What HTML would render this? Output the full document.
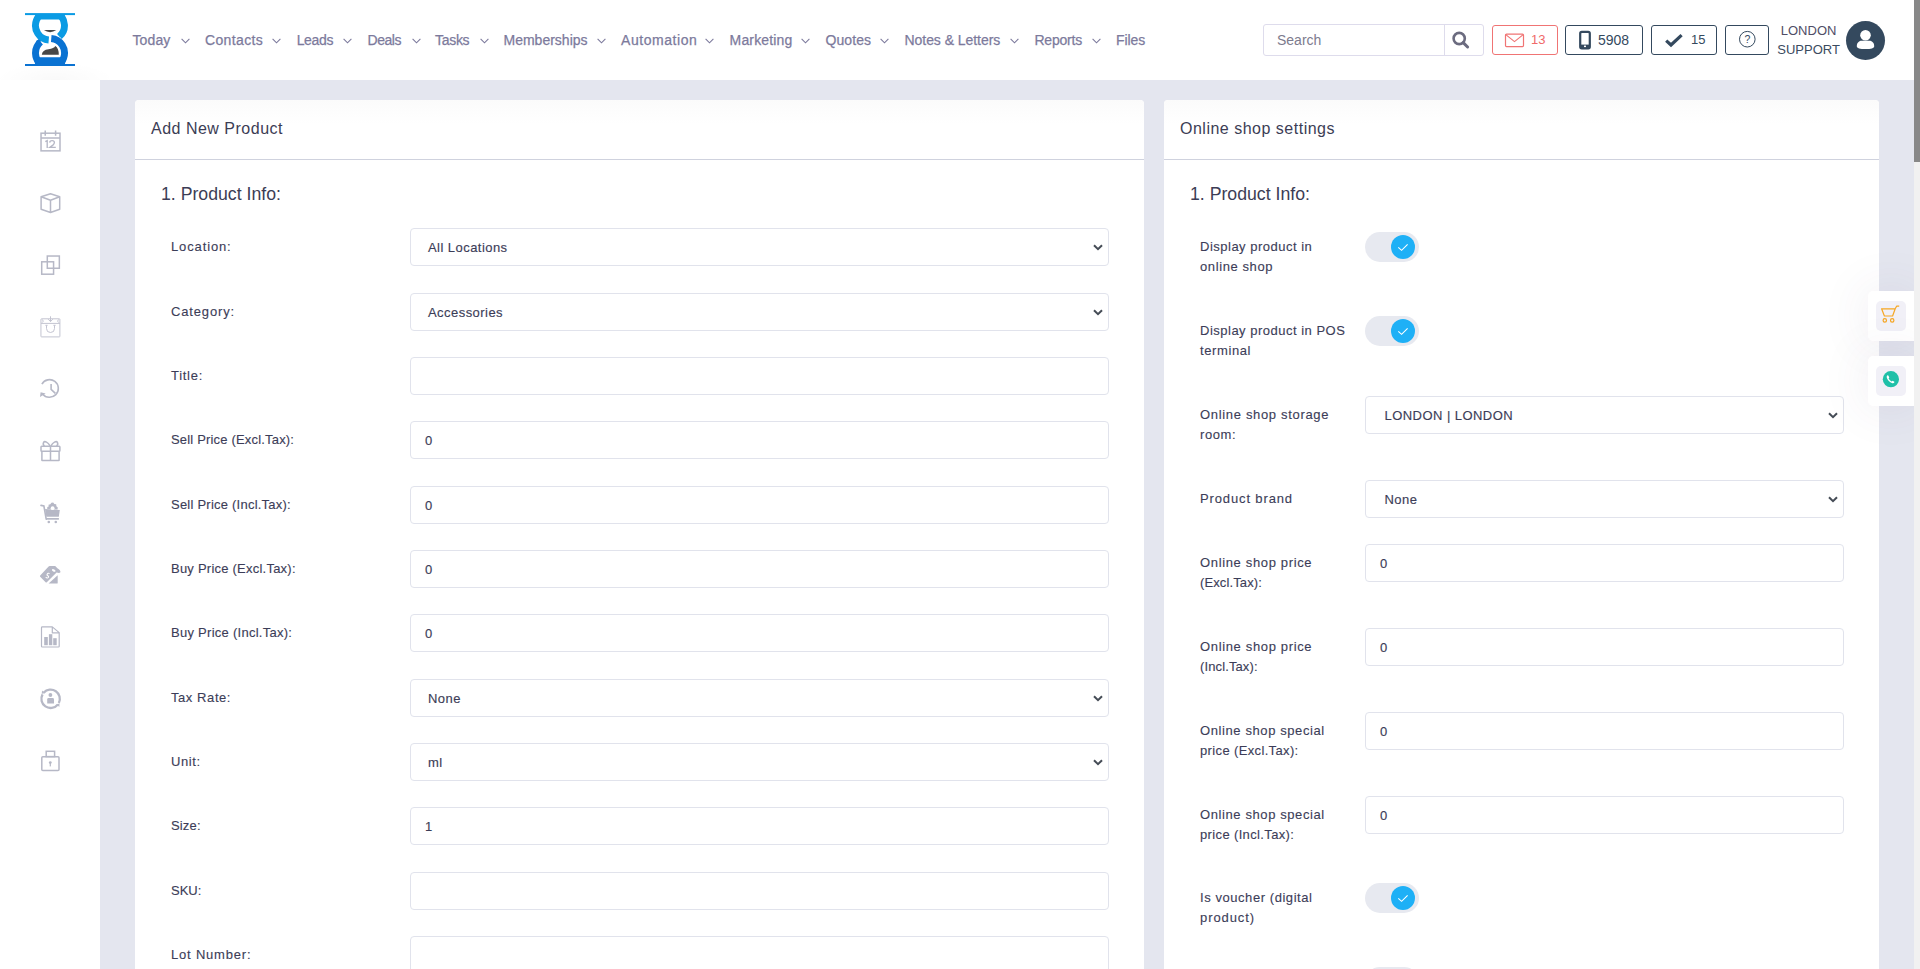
<!DOCTYPE html>
<html><head><meta charset="utf-8">
<style>
*{box-sizing:border-box;margin:0;padding:0}
html,body{width:1920px;height:969px;overflow:hidden;background:#fff;font-family:"Liberation Sans",sans-serif;}
#hdr{position:absolute;left:0;top:0;width:1914px;height:80px;background:#fff;z-index:2}
#side{position:absolute;left:0;top:80px;width:100px;height:889px;background:#fff}
#main{position:absolute;left:100px;top:80px;width:1814px;height:889px;background:#e4e6ef}
#sb{position:absolute;left:1914px;top:0;width:6px;height:969px;background:#f1f1f1;z-index:5}
#sbt{position:absolute;left:1914px;top:0;width:6px;height:162px;background:#888;z-index:6}
.nav{position:absolute;top:31px;font-size:14px;line-height:18px;color:#7c7a9c;white-space:nowrap;-webkit-text-stroke:0.25px #7c7a9c}
.chev{position:absolute;top:38px;width:9px;height:6px}
.card{position:absolute;top:100px;height:900px;background:#fff;border-radius:4px}
.chead{position:absolute;left:0;top:0;right:0;height:24px;border-radius:4px 4px 0 0;background:linear-gradient(#fbfbfb,#fff)}
.ctitle{position:absolute;font-size:16px;letter-spacing:0.5px;color:#3c3d55;white-space:nowrap;line-height:20px}
.sep{position:absolute;left:0;right:0;top:59px;height:1px;background:#cfd2de}
.sect{position:absolute;font-size:17.7px;color:#3c3d55;white-space:nowrap;line-height:22px}
.lbl{position:absolute;font-size:13px;letter-spacing:0.45px;line-height:20px;-webkit-text-stroke:0.12px #3c3d58;color:#3c3d58;white-space:nowrap}
.inp{position:absolute;height:38px;border:1px solid #e1e3ec;border-radius:4px;background:#fff}
.inp span{position:absolute;top:1px;-webkit-text-stroke:0.15px #3c3d58;font-size:13px;letter-spacing:0.45px;line-height:36px;color:#3c3d58;white-space:nowrap}
.schev{position:absolute;right:5px;top:15px;width:10px;height:7px}
.tog{position:absolute;width:54px;height:30px;border-radius:15px;background:#e7e9f0}
.knob{position:absolute;left:26px;top:3px;width:24px;height:24px;border-radius:12px;background:#1eb0f6}
.knob svg{display:block}
.hbtn{position:absolute;top:25px;height:30px;border:1px solid #2f4256;border-radius:2px;background:#fff}
.sico{position:absolute;left:40px;width:21px;height:21px}

</style></head><body>
<div id="hdr">
<svg style="position:absolute;left:25px;top:13px" width="50" height="53" viewBox="0 0 50 53">
<defs><clipPath id="lc"><rect x="0" y="2" width="50" height="49"/></clipPath></defs>
<rect x="0" y="0.1" width="50" height="2" fill="#0a9be4"/>
<rect x="0" y="51" width="50" height="2" fill="#0a72d2"/>
<g clip-path="url(#lc)" fill="none" stroke-width="6.9">
<path d="M15.7 28.9 A14.5 14.5 0 0 1 13.9 26.4" stroke="#0a72d2"/>
<path d="M23.7 26.9 A14.5 14.5 0 0 1 17.8 25.0" stroke="#fff" stroke-width="9.5"/>
<path d="M23.74 26.94 A14.5 14.5 0 1 1 34.3 23.6" stroke="#0a9be4"/>
<path d="M26.3 25.56 A14.5 14.5 0 0 1 33.5 28.8" stroke="#fff" stroke-width="9.5"/>
<path d="M26.26 25.56 A14.5 14.5 0 1 1 15.68 28.9" stroke="#0a72d2"/>
</g>
<path d="M10.6 2 H39.4 L41 6.6 H9 Z" fill="#0a9be4"/>
<path d="M9.5 44.3 H40.5 L40 51 H10 Z" fill="#0a72d2"/>
<path d="M18.9 17 Q25 21.3 31.3 17 Z" fill="#474747"/>
<path d="M16.8 41.8 Q17.4 36.8 23.5 36.2 Q29 35.6 30.3 33 Q33.8 35.2 33.8 41.8 Z" fill="#474747"/>
</svg>

<div class="nav" style="left:132.5px;letter-spacing:0.12px">Today</div>
<svg class="chev" style="left:181px" viewBox="0 0 9 6"><path d="M0.6 0.8 L4.5 4.8 L8.4 0.8" fill="none" stroke="#7c7a9c" stroke-width="1.1"/></svg>
<div class="nav" style="left:205px;letter-spacing:0.36px">Contacts</div>
<svg class="chev" style="left:272px" viewBox="0 0 9 6"><path d="M0.6 0.8 L4.5 4.8 L8.4 0.8" fill="none" stroke="#7c7a9c" stroke-width="1.1"/></svg>
<div class="nav" style="left:296.7px;letter-spacing:-0.35px">Leads</div>
<svg class="chev" style="left:343px" viewBox="0 0 9 6"><path d="M0.6 0.8 L4.5 4.8 L8.4 0.8" fill="none" stroke="#7c7a9c" stroke-width="1.1"/></svg>
<div class="nav" style="left:367.5px;letter-spacing:-0.45px">Deals</div>
<svg class="chev" style="left:412px" viewBox="0 0 9 6"><path d="M0.6 0.8 L4.5 4.8 L8.4 0.8" fill="none" stroke="#7c7a9c" stroke-width="1.1"/></svg>
<div class="nav" style="left:435px;letter-spacing:-0.3px">Tasks</div>
<svg class="chev" style="left:480px" viewBox="0 0 9 6"><path d="M0.6 0.8 L4.5 4.8 L8.4 0.8" fill="none" stroke="#7c7a9c" stroke-width="1.1"/></svg>
<div class="nav" style="left:503.5px;letter-spacing:0.0px">Memberships</div>
<svg class="chev" style="left:597.3px" viewBox="0 0 9 6"><path d="M0.6 0.8 L4.5 4.8 L8.4 0.8" fill="none" stroke="#7c7a9c" stroke-width="1.1"/></svg>
<div class="nav" style="left:621px;letter-spacing:0.55px">Automation</div>
<svg class="chev" style="left:705px" viewBox="0 0 9 6"><path d="M0.6 0.8 L4.5 4.8 L8.4 0.8" fill="none" stroke="#7c7a9c" stroke-width="1.1"/></svg>
<div class="nav" style="left:729.6px;letter-spacing:0.15px">Marketing</div>
<svg class="chev" style="left:801px" viewBox="0 0 9 6"><path d="M0.6 0.8 L4.5 4.8 L8.4 0.8" fill="none" stroke="#7c7a9c" stroke-width="1.1"/></svg>
<div class="nav" style="left:825.4px;letter-spacing:0.1px">Quotes</div>
<svg class="chev" style="left:880px" viewBox="0 0 9 6"><path d="M0.6 0.8 L4.5 4.8 L8.4 0.8" fill="none" stroke="#7c7a9c" stroke-width="1.1"/></svg>
<div class="nav" style="left:904.5px;letter-spacing:-0.05px">Notes &amp; Letters</div>
<svg class="chev" style="left:1010px" viewBox="0 0 9 6"><path d="M0.6 0.8 L4.5 4.8 L8.4 0.8" fill="none" stroke="#7c7a9c" stroke-width="1.1"/></svg>
<div class="nav" style="left:1034.4px;letter-spacing:-0.2px">Reports</div>
<svg class="chev" style="left:1092px" viewBox="0 0 9 6"><path d="M0.6 0.8 L4.5 4.8 L8.4 0.8" fill="none" stroke="#7c7a9c" stroke-width="1.1"/></svg>
<div class="nav" style="left:1116px;letter-spacing:-0.08px">Files</div>
<div style="position:absolute;left:1263px;top:24px;width:221px;height:32px;border:1px solid #dedcec;border-radius:3px;background:#fff"></div>
<div style="position:absolute;left:1444px;top:25px;width:1px;height:30px;background:#dedcec"></div>
<div style="position:absolute;left:1277px;top:31px;font-size:14px;line-height:18px;color:#7d7b8e;white-space:nowrap">Search</div>
<svg style="position:absolute;left:1450px;top:30px" width="20" height="20" viewBox="0 0 20 20"><circle cx="9.2" cy="8.5" r="5.6" fill="none" stroke="#6b6b7f" stroke-width="2.6"/><path d="M13.2 12.6 L17.6 17" stroke="#6b6b7f" stroke-width="3" stroke-linecap="round"/></svg>
<div style="position:absolute;left:1492px;top:25px;width:66px;height:30px;border:1.3px solid #f07474;border-radius:3px"></div>
<svg style="position:absolute;left:1504px;top:33px" width="21" height="15" viewBox="0 0 21 15"><rect x="1.5" y="1.2" width="18" height="12.4" rx="1" fill="none" stroke="#f07474" stroke-width="1.2"/><path d="M1.8 1.6 L10.5 8.6 L19.2 1.6" fill="none" stroke="#f07474" stroke-width="1.2"/></svg>
<div style="position:absolute;left:1531px;top:32px;font-size:13px;line-height:15px;color:#f06a6a;white-space:nowrap">13</div>
<div style="position:absolute;left:1565px;top:25px;width:78px;height:30px;border:1.5px solid #34495e;border-radius:3px"></div>
<svg style="position:absolute;left:1578px;top:30px" width="14" height="20" viewBox="0 0 14 20"><rect x="2.2" y="1.8" width="9.6" height="16.6" rx="1.6" fill="none" stroke="#34495e" stroke-width="2.2"/><rect x="2.2" y="14.6" width="9.6" height="3.8" fill="#34495e"/><rect x="6" y="15.6" width="2" height="1.5" fill="#fff"/></svg>
<div style="position:absolute;left:1598px;top:31.6px;font-size:14px;line-height:16px;color:#34495e;white-space:nowrap">5908</div>
<div style="position:absolute;left:1651px;top:25px;width:66px;height:30px;border:1.5px solid #34495e;border-radius:3px"></div>
<svg style="position:absolute;left:1664px;top:33px" width="20" height="15" viewBox="0 0 20 15"><path d="M2.2 7.6 L7 12 L17.6 2.2" fill="none" stroke="#34495e" stroke-width="3.2"/></svg>
<div style="position:absolute;left:1691px;top:32px;font-size:13px;line-height:15px;color:#34495e;white-space:nowrap">15</div>
<div style="position:absolute;left:1725px;top:25px;width:44px;height:30px;border:1.5px solid #34495e;border-radius:3px"></div>
<svg style="position:absolute;left:1738px;top:30px" width="19" height="19" viewBox="0 0 19 19"><circle cx="9.3" cy="9.2" r="7.8" fill="none" stroke="#34495e" stroke-width="1"/><text x="9.3" y="13" text-anchor="middle" font-family="Liberation Sans" font-size="10.5" fill="#34495e">?</text></svg>
<div style="position:absolute;left:1758.6px;top:21px;width:100px;text-align:center;font-size:13px;line-height:19px;color:#4f4d66;white-space:nowrap">LONDON<br><span style="color:#3b4b60">SUPPORT</span></div>
<div style="position:absolute;left:1846px;top:21px;width:39px;height:39px;border-radius:50%;background:#34495e"></div>
<svg style="position:absolute;left:1846px;top:21px" width="39" height="39" viewBox="0 0 39 39"><circle cx="19.5" cy="14.3" r="5.3" fill="#fff"/><path d="M10.8 25.2 C10.8 21.2 13.8 19.8 15.3 19.8 L23.7 19.8 C25.2 19.8 28.2 21.2 28.2 25.2 C28.2 27.2 25 28 19.5 28 C14 28 10.8 27.2 10.8 25.2 Z" fill="#fff"/></svg>

</div>
<div id="side"></div>
<div style="position:absolute;left:0;top:62px;width:120px;height:18px;background:radial-gradient(ellipse 60px 18px at 55px 18px, rgba(0,0,0,0.025), rgba(0,0,0,0) 100%);z-index:3"></div>
<svg style="position:absolute;left:35px;top:126px" width="32" height="32" viewBox="0 0 32 32" fill="none" stroke="#b6b8c6" stroke-width="1.5"><rect x="6.03" y="7.2" width="18.97" height="17.65"/><path d="M6 12.05 H25 M10.24 4.6 V9.7 M20.6 4.6 V9.7"/><path d="M10.3 15.7 L12.2 14.7 V22.1 M14.7 16.6 Q14.8 14.6 17.1 14.6 Q19.4 14.6 19.4 16.6 Q19.4 17.9 17.9 19.1 L14.8 21.4 H20.8" stroke-width="1.35"/></svg>
<svg style="position:absolute;left:35px;top:188px" width="32" height="32" viewBox="0 0 32 32" fill="none" stroke="#b6b8c6" stroke-width="1.5" stroke-linejoin="round"><path d="M15.5 5.8 L24.7 8.8 L24.7 21.2 L15.5 24.5 L6.1 21.2 L6.1 8.8 Z M6.1 8.8 L15.5 12.2 L24.7 8.8 M15.5 12.2 L15.5 24.5"/></svg>
<svg style="position:absolute;left:35px;top:250px" width="32" height="32" viewBox="0 0 32 32" fill="none" stroke="#b6b8c6" stroke-width="1.5"><rect x="12.3" y="6.03" width="12.05" height="12.22"/><rect x="6.7" y="11.8" width="11.87" height="12.4"/></svg>
<svg style="position:absolute;left:35px;top:312px" width="32" height="32" viewBox="0 0 32 32" fill="none" stroke="#c3c4d1" stroke-width="1"><rect x="5.95" y="6.8" width="18.95" height="18.1" rx="0.6"/><path d="M6 11.4 H25 M15.5 4.3 V9.6 M13.2 7.2 L15.5 9.6 L17.8 7.2 M7.2 7.4 L8.3 9.1 L7.2 10.6 M23.7 7.4 L22.6 9.1 L23.7 10.6 M11.5 13.3 V16.5 A4 4 0 0 0 19.5 16.5 V13.3 M10.4 13.3 H12.6 M18.4 13.3 H20.6"/></svg>
<svg style="position:absolute;left:35px;top:374px" width="32" height="32" viewBox="0 0 32 32" fill="none" stroke="#b6b8c6" stroke-width="1.6"><path d="M6.9 10.1 A8.8 8.8 0 1 1 7.6 19.9"/><path d="M16.1 10.1 V15.3 L20.4 19.3"/><path d="M5 22.9 L5.6 18.3 L10.6 19.4 Z" fill="#b6b8c6" stroke="none"/></svg>
<svg style="position:absolute;left:35px;top:436px" width="32" height="32" viewBox="0 0 32 32" fill="none" stroke="#b6b8c6" stroke-width="1.5" stroke-linejoin="round"><rect x="6" y="10.3" width="18.9" height="5" rx="0.8"/><path d="M6.9 15.5 V24.3 Q6.9 24.6 7.2 24.6 H23.8 Q24.1 24.6 24.1 24.3 V15.5 M15.5 11 V24.5"/><path d="M15 9.9 C13.2 6.2 9.6 4.6 8.6 6.4 C7.8 8.1 8.8 9.5 9.6 9.9 M16 9.9 C17.8 6.2 21.4 4.6 22.4 6.4 C23.2 8.1 22.2 9.5 21.4 9.9"/></svg>
<svg style="position:absolute;left:35px;top:498px" width="32" height="32" viewBox="0 0 32 32"><path d="M6 7.4 L8.9 8 L11.2 21.2" fill="none" stroke="#b6b8c6" stroke-width="1.6" stroke-linecap="round"/><path d="M10 11 L24.8 12.1 L23.8 18.8 L11.3 18.8 Z" fill="#b6b8c6"/><rect x="11" y="20" width="12.9" height="1.7" fill="#b6b8c6"/><circle cx="13.8" cy="24" r="1.3" fill="#b6b8c6"/><circle cx="20.8" cy="24" r="1.3" fill="#b6b8c6"/><path d="M12.2 11 L12.3 9.1 L13.7 8.6 L13.5 6.7 L15.3 6.2 L16.4 4.7 L18.2 4.5 L19.3 6 L21.2 6.3 L21.4 8.2 L22.8 9.4 L22.5 11.4 Z" fill="#b6b8c6"/><circle cx="17.6" cy="10.2" r="1.9" fill="#fff"/></svg>
<svg style="position:absolute;left:35px;top:560px" width="32" height="32" viewBox="0 0 32 32"><path d="M5.2 15.4 L13.6 6.4 Q14 6 14.6 6 L20.2 6 L22.4 8.3 Q25.8 10.4 25.4 12.3 Q24.6 13.5 21.6 12.6 L11.8 22.2 Q11.2 22.7 10.6 22.2 L5.2 16.8 Q4.6 16.1 5.2 15.4 Z" fill="#b6b8c6"/><path d="M13.6 23.6 L22.7 15.2 L22.7 22.9 Q22.7 23.6 22 23.6 Z" fill="#b6b8c6"/><ellipse cx="18.7" cy="10.4" rx="1.9" ry="1.1" transform="rotate(25 18.7 10.4)" fill="#fff"/><path d="M14.6 13.6 Q13.2 12.6 12.3 14 Q11.6 15.2 12.8 15.8 Q14 16.4 13.3 17.5 Q12.4 18.6 10.7 17.1" fill="none" stroke="#fff" stroke-width="1.1"/></svg>
<svg style="position:absolute;left:35px;top:622px" width="32" height="32" viewBox="0 0 32 32" fill="none" stroke="#b6b8c6" stroke-width="1.2" stroke-linejoin="round"><path d="M7.3 4.9 H17.3 L24.2 10.6 V24.2 Q24.2 25 23.4 25 H7.3 Q6.5 25 6.5 24.2 V5.7 Q6.5 4.9 7.3 4.9 Z M17.3 4.9 V10.8 H24.2"/><rect x="9.2" y="15" width="3.6" height="8.2" fill="#b6b8c6" stroke="none"/><rect x="13.9" y="12.2" width="3.4" height="11" fill="#b6b8c6" stroke="none"/><rect x="18.2" y="16.2" width="3.5" height="7" fill="#b6b8c6" stroke="none"/></svg>
<svg style="position:absolute;left:35px;top:684px" width="32" height="32" viewBox="0 0 32 32" fill="none" stroke="#b6b8c6" stroke-width="2.3"><path d="M8.76 8.64 A9.2 9.2 0 0 1 23.80 18.98 M22.65 20.71 A9.2 9.2 0 0 1 7.55 10.34"/><path d="M7.04 6.53 L9.92 9.31 L6.74 9.86 Z M24.30 22.92 L21.38 20.19 L24.54 19.58 Z" fill="#b6b8c6" stroke="none"/><circle cx="15.4" cy="11" r="1.9" fill="#b6b8c6" stroke="none"/><path d="M12.2 19.6 V15.4 Q12.2 14 13.6 14 H17.6 Q19 14 19 15.4 V19.6 Z" fill="#b6b8c6" stroke="none"/></svg>
<svg style="position:absolute;left:35px;top:746px" width="32" height="32" viewBox="0 0 32 32" fill="none" stroke="#b6b8c6" stroke-width="1.5"><rect x="11.2" y="5.3" width="8.4" height="5.3"/><rect x="6.8" y="10.7" width="17.2" height="13.8" rx="1"/><circle cx="15.3" cy="16.6" r="1.4" fill="#b6b8c6" stroke="none"/><rect x="14.7" y="16.6" width="1.2" height="3.8" fill="#b6b8c6" stroke="none"/></svg>

<div id="main"></div>
<div class="card" style="left:135px;width:1009px">
<div class="chead"></div>
<div class="ctitle" style="left:16px;top:19px">Add New Product</div>
<div class="sep"></div>
<div class="sect" style="left:26px;top:83px">1. Product Info:</div>
</div>
<div class="lbl" style="left:171px;top:237.30px"><span style="letter-spacing:0.87px">Location:</span></div>
<div class="inp" style="left:410px;width:699px;top:228.30px"><span style="left:17px">All Locations</span><svg class="schev" viewBox="0 0 10 7"><path d="M1 1.2 L5 5.2 L9 1.2" fill="none" stroke="#454c56" stroke-width="2"/></svg></div>
<div class="lbl" style="left:171px;top:301.63px"><span style="letter-spacing:0.85px">Category:</span></div>
<div class="inp" style="left:410px;width:699px;top:292.63px"><span style="left:17px">Accessories</span><svg class="schev" viewBox="0 0 10 7"><path d="M1 1.2 L5 5.2 L9 1.2" fill="none" stroke="#454c56" stroke-width="2"/></svg></div>
<div class="lbl" style="left:171px;top:365.96px"><span style="letter-spacing:0.72px">Title:</span></div>
<div class="inp" style="left:410px;width:699px;top:356.96px"></div>
<div class="lbl" style="left:171px;top:430.29px"><span style="letter-spacing:0.18px">Sell Price (Excl.Tax):</span></div>
<div class="inp" style="left:410px;width:699px;top:421.29px"><span style="left:14px">0</span></div>
<div class="lbl" style="left:171px;top:494.62px"><span style="letter-spacing:0.23px">Sell Price (Incl.Tax):</span></div>
<div class="inp" style="left:410px;width:699px;top:485.62px"><span style="left:14px">0</span></div>
<div class="lbl" style="left:171px;top:558.95px"><span style="letter-spacing:0.23px">Buy Price (Excl.Tax):</span></div>
<div class="inp" style="left:410px;width:699px;top:549.95px"><span style="left:14px">0</span></div>
<div class="lbl" style="left:171px;top:623.28px"><span style="letter-spacing:0.27px">Buy Price (Incl.Tax):</span></div>
<div class="inp" style="left:410px;width:699px;top:614.28px"><span style="left:14px">0</span></div>
<div class="lbl" style="left:171px;top:687.61px"><span style="letter-spacing:0.57px">Tax Rate:</span></div>
<div class="inp" style="left:410px;width:699px;top:678.61px"><span style="left:17px">None</span><svg class="schev" viewBox="0 0 10 7"><path d="M1 1.2 L5 5.2 L9 1.2" fill="none" stroke="#454c56" stroke-width="2"/></svg></div>
<div class="lbl" style="left:171px;top:751.94px"><span style="letter-spacing:0.6px">Unit:</span></div>
<div class="inp" style="left:410px;width:699px;top:742.94px"><span style="left:17px">ml</span><svg class="schev" viewBox="0 0 10 7"><path d="M1 1.2 L5 5.2 L9 1.2" fill="none" stroke="#454c56" stroke-width="2"/></svg></div>
<div class="lbl" style="left:171px;top:816.27px"><span style="letter-spacing:0.15px">Size:</span></div>
<div class="inp" style="left:410px;width:699px;top:807.27px"><span style="left:14px">1</span></div>
<div class="lbl" style="left:171px;top:880.60px"><span style="letter-spacing:0.0px">SKU:</span></div>
<div class="inp" style="left:410px;width:699px;top:871.60px"></div>
<div class="lbl" style="left:171px;top:944.93px"><span style="letter-spacing:0.8px">Lot Number:</span></div>
<div class="inp" style="left:410px;width:699px;top:935.93px"></div>
<div class="card" style="left:1164px;width:715px">
<div class="chead"></div>
<div class="ctitle" style="left:16px;top:19px">Online shop settings</div>
<div class="sep"></div>
<div class="sect" style="left:26px;top:83px">1. Product Info:</div>
</div>
<div class="lbl" style="left:1200px;top:236.60px"><span style="letter-spacing:0.5px">Display product in</span><br><span style="letter-spacing:0.6px">online shop</span></div>
<div class="tog" style="left:1365px;top:232px"><div class="knob"><svg viewBox="0 0 24 24" width="24" height="24"><path d="M7.3 12.3 L10.6 15.3 L16.6 9.3" fill="none" stroke="#fff" stroke-width="1.1"/></svg></div></div>
<div class="lbl" style="left:1200px;top:320.60px"><span style="letter-spacing:0.5px">Display product in POS</span><br><span style="letter-spacing:0.6px">terminal</span></div>
<div class="tog" style="left:1365px;top:316px"><div class="knob"><svg viewBox="0 0 24 24" width="24" height="24"><path d="M7.3 12.3 L10.6 15.3 L16.6 9.3" fill="none" stroke="#fff" stroke-width="1.1"/></svg></div></div>
<div class="lbl" style="left:1200px;top:404.60px"><span style="letter-spacing:0.67px">Online shop storage</span><br><span style="letter-spacing:0.6px">room:</span></div>
<div class="inp" style="left:1365px;width:479px;top:396.30px"><span style="left:18.5px">LONDON | LONDON</span><svg class="schev" viewBox="0 0 10 7"><path d="M1 1.2 L5 5.2 L9 1.2" fill="none" stroke="#454c56" stroke-width="2"/></svg></div>
<div class="lbl" style="left:1200px;top:488.60px"><span style="letter-spacing:0.87px">Product brand</span></div>
<div class="inp" style="left:1365px;width:479px;top:480.30px"><span style="left:18.5px">None</span><svg class="schev" viewBox="0 0 10 7"><path d="M1 1.2 L5 5.2 L9 1.2" fill="none" stroke="#454c56" stroke-width="2"/></svg></div>
<div class="lbl" style="left:1200px;top:552.60px"><span style="letter-spacing:0.65px">Online shop price</span><br><span style="letter-spacing:0.12px">(Excl.Tax):</span></div>
<div class="inp" style="left:1365px;width:479px;top:544.30px"><span style="left:14px">0</span></div>
<div class="lbl" style="left:1200px;top:636.60px"><span style="letter-spacing:0.65px">Online shop price</span><br><span style="letter-spacing:0.12px">(Incl.Tax):</span></div>
<div class="inp" style="left:1365px;width:479px;top:628.30px"><span style="left:14px">0</span></div>
<div class="lbl" style="left:1200px;top:720.60px"><span style="letter-spacing:0.6px">Online shop special</span><br><span style="letter-spacing:0.36px">price (Excl.Tax):</span></div>
<div class="inp" style="left:1365px;width:479px;top:712.30px"><span style="left:14px">0</span></div>
<div class="lbl" style="left:1200px;top:804.60px"><span style="letter-spacing:0.6px">Online shop special</span><br><span style="letter-spacing:0.36px">price (Incl.Tax):</span></div>
<div class="inp" style="left:1365px;width:479px;top:796.30px"><span style="left:14px">0</span></div>
<div class="lbl" style="left:1200px;top:887.60px"><span style="letter-spacing:0.56px">Is voucher (digital</span><br><span style="letter-spacing:0.91px">product)</span></div>
<div class="tog" style="left:1365px;top:883px"><div class="knob"><svg viewBox="0 0 24 24" width="24" height="24"><path d="M7.3 12.3 L10.6 15.3 L16.6 9.3" fill="none" stroke="#fff" stroke-width="1.1"/></svg></div></div>
<div class="lbl" style="left:1200px;top:971.60px"><br></div>
<div class="tog" style="left:1365px;top:967px"><div class="knob"><svg viewBox="0 0 24 24" width="24" height="24"><path d="M7.3 12.3 L10.6 15.3 L16.6 9.3" fill="none" stroke="#fff" stroke-width="1.1"/></svg></div></div>
<div style="position:absolute;left:1879px;top:80px;width:35px;height:889px;background:#e4e6ef"></div>
<div style="position:absolute;left:1868px;top:291px;width:46px;height:50px;background:#fff;border-radius:5px 0 0 5px;box-shadow:0 0 50px 0 rgba(82,63,105,0.10)"></div>
<div style="position:absolute;left:1876px;top:301px;width:30px;height:30px;background:#f1f0f7;border-radius:5px"></div>
<svg style="position:absolute;left:1876px;top:301px" width="30" height="30" viewBox="0 0 30 30" fill="none" stroke="#f6a623" stroke-width="1.2" stroke-linejoin="round"><path d="M5.6 7.8 L19.2 7.8 L16.6 15 L8.4 15 Z M19.2 7.8 L20.6 5.2 L23.2 5.2"/><circle cx="8.8" cy="19.4" r="1.7"/><circle cx="16.2" cy="19.4" r="1.7"/></svg>
<div style="position:absolute;left:1868px;top:356px;width:46px;height:50px;background:#fff;border-radius:5px 0 0 5px;box-shadow:0 0 50px 0 rgba(82,63,105,0.10)"></div>
<div style="position:absolute;left:1876px;top:366px;width:30px;height:30px;background:#f1f0f7;border-radius:5px"></div>
<svg style="position:absolute;left:1876px;top:366px" width="30" height="30" viewBox="0 0 30 30"><circle cx="14.9" cy="13.2" r="8.1" fill="#1fc0a8"/><path d="M11.4 9.3 Q10.4 10 10.8 11.8 Q11.8 15.2 15.8 17 Q17.5 17.6 18.3 16.6 L18.4 15.8 L16.6 14.8 L15.7 15.5 Q13.6 14.5 12.6 12.4 L13.3 11.5 L12.3 9.6 Z" fill="#fff"/></svg>

<div id="sb"></div><div id="sbt"></div>
</body></html>
